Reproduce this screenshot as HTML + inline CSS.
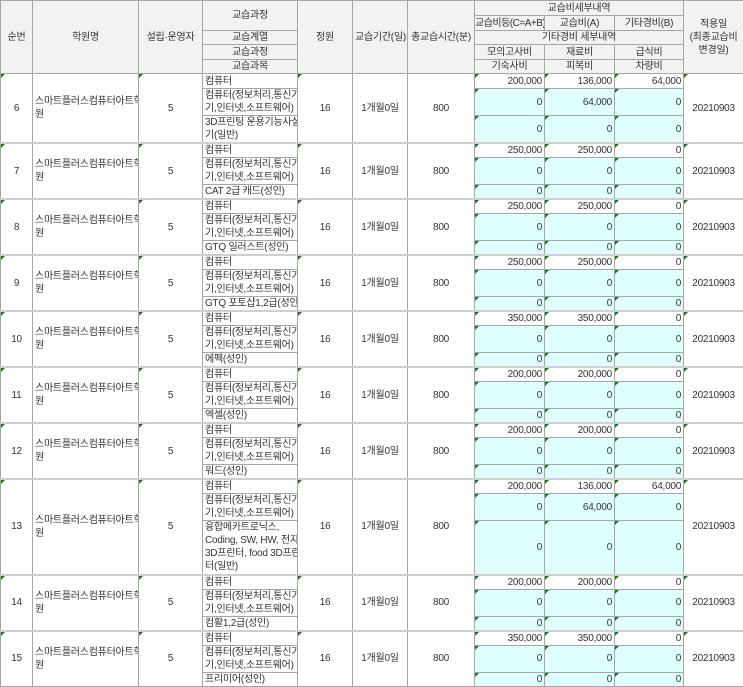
<!DOCTYPE html>
<html><head><meta charset="utf-8"><style>
body{margin:0;background:#fff;}
table{border-collapse:collapse;table-layout:fixed;width:743px;font-family:"Liberation Sans","Noto Sans CJK KR",sans-serif;font-size:10px;color:#333;}
td{border:1px solid #a6a6a6;padding:0 2px;line-height:13px;text-align:center;position:relative;overflow:hidden;white-space:nowrap;letter-spacing:-0.25px;}
.h td{background:#f2f2f2;}
.l{text-align:left;padding-left:2px;padding-right:0;}
.r{text-align:right;}
.c{background:#dfffff;}
.g::before{content:"";position:absolute;left:0;top:0;border-top:4px solid #1a7a1a;border-right:4px solid transparent;}
tr.s td{border-top:2px solid #cfcfcf;}
</style></head><body>
<table>
<colgroup><col style="width:32px"><col style="width:106px"><col style="width:64px"><col style="width:95px"><col style="width:55px"><col style="width:55px"><col style="width:67px"><col style="width:70px"><col style="width:70px"><col style="width:69px"><col style="width:60px"></colgroup>
<tr class="h" style="height:15px"><td rowspan="5">순번</td><td rowspan="5">학원명</td><td rowspan="5">설립·운영자</td><td rowspan="2">교습과정</td><td rowspan="5">정원</td><td rowspan="5">교습기간(일)</td><td rowspan="5">총교습시간(분)</td><td colspan="3">교습비세부내역</td><td rowspan="5">적용일<br>(최종교습비<br>변경일)</td></tr>
<tr class="h" style="height:15px"><td style="letter-spacing:-0.5px;padding:0">교습비등(C=A+B)</td><td>교습비(A)</td><td>기타경비(B)</td></tr>
<tr class="h" style="height:14px"><td>교습계열</td><td colspan="3">기타경비 세부내역</td></tr>
<tr class="h" style="height:15px"><td>교습과정</td><td>모의고사비</td><td>재료비</td><td>급식비</td></tr>
<tr class="h" style="height:14px"><td>교습과목</td><td>기숙사비</td><td>피복비</td><td>차량비</td></tr>

<tr style="height:15px"><td rowspan="3" class="g">6</td><td rowspan="3" class="l">스마트플러스컴퓨터아트학<br>원</td><td rowspan="3" class="g">5</td><td class="l">컴퓨터</td><td rowspan="3" class="g">16</td><td rowspan="3">1개월0일</td><td rowspan="3">800</td><td class="r g">200,000</td><td class="r g">136,000</td><td class="r g">64,000</td><td rowspan="3" class="g">20210903</td></tr>
<tr style="height:27px"><td class="l">컴퓨터(정보처리,통신기<br>기,인터넷,소프트웨어)</td><td class="r c g">0</td><td class="r c g">64,000</td><td class="r c g">0</td></tr>
<tr style="height:26px"><td class="l">3D프린팅 운용기능사실<br>기(일반)</td><td class="r c g">0</td><td class="r c g">0</td><td class="r c g">0</td></tr>

<tr class="s" style="height:14px"><td rowspan="3" class="g">7</td><td rowspan="3" class="l">스마트플러스컴퓨터아트학<br>원</td><td rowspan="3" class="g">5</td><td class="l">컴퓨터</td><td rowspan="3" class="g">16</td><td rowspan="3">1개월0일</td><td rowspan="3">800</td><td class="r g">250,000</td><td class="r g">250,000</td><td class="r g">0</td><td rowspan="3" class="g">20210903</td></tr>
<tr style="height:26px"><td class="l">컴퓨터(정보처리,통신기<br>기,인터넷,소프트웨어)</td><td class="r c g">0</td><td class="r c g">0</td><td class="r c g">0</td></tr>
<tr style="height:14px"><td class="l">CAT 2급 캐드(성인)</td><td class="r c g">0</td><td class="r c g">0</td><td class="r c g">0</td></tr>

<tr class="s" style="height:14px"><td rowspan="3" class="g">8</td><td rowspan="3" class="l">스마트플러스컴퓨터아트학<br>원</td><td rowspan="3" class="g">5</td><td class="l">컴퓨터</td><td rowspan="3" class="g">16</td><td rowspan="3">1개월0일</td><td rowspan="3">800</td><td class="r g">250,000</td><td class="r g">250,000</td><td class="r g">0</td><td rowspan="3" class="g">20210903</td></tr>
<tr style="height:26px"><td class="l">컴퓨터(정보처리,통신기<br>기,인터넷,소프트웨어)</td><td class="r c g">0</td><td class="r c g">0</td><td class="r c g">0</td></tr>
<tr style="height:14px"><td class="l">GTQ 일러스트(성인)</td><td class="r c g">0</td><td class="r c g">0</td><td class="r c g">0</td></tr>

<tr class="s" style="height:14px"><td rowspan="3" class="g">9</td><td rowspan="3" class="l">스마트플러스컴퓨터아트학<br>원</td><td rowspan="3" class="g">5</td><td class="l">컴퓨터</td><td rowspan="3" class="g">16</td><td rowspan="3">1개월0일</td><td rowspan="3">800</td><td class="r g">250,000</td><td class="r g">250,000</td><td class="r g">0</td><td rowspan="3" class="g">20210903</td></tr>
<tr style="height:26px"><td class="l">컴퓨터(정보처리,통신기<br>기,인터넷,소프트웨어)</td><td class="r c g">0</td><td class="r c g">0</td><td class="r c g">0</td></tr>
<tr style="height:14px"><td class="l">GTQ 포토샵1,2급(성인)</td><td class="r c g">0</td><td class="r c g">0</td><td class="r c g">0</td></tr>

<tr class="s" style="height:14px"><td rowspan="3" class="g">10</td><td rowspan="3" class="l">스마트플러스컴퓨터아트학<br>원</td><td rowspan="3" class="g">5</td><td class="l">컴퓨터</td><td rowspan="3" class="g">16</td><td rowspan="3">1개월0일</td><td rowspan="3">800</td><td class="r g">350,000</td><td class="r g">350,000</td><td class="r g">0</td><td rowspan="3" class="g">20210903</td></tr>
<tr style="height:27px"><td class="l">컴퓨터(정보처리,통신기<br>기,인터넷,소프트웨어)</td><td class="r c g">0</td><td class="r c g">0</td><td class="r c g">0</td></tr>
<tr style="height:14px"><td class="l">에펙(성인)</td><td class="r c g">0</td><td class="r c g">0</td><td class="r c g">0</td></tr>

<tr class="s" style="height:14px"><td rowspan="3" class="g">11</td><td rowspan="3" class="l">스마트플러스컴퓨터아트학<br>원</td><td rowspan="3" class="g">5</td><td class="l">컴퓨터</td><td rowspan="3" class="g">16</td><td rowspan="3">1개월0일</td><td rowspan="3">800</td><td class="r g">200,000</td><td class="r g">200,000</td><td class="r g">0</td><td rowspan="3" class="g">20210903</td></tr>
<tr style="height:26px"><td class="l">컴퓨터(정보처리,통신기<br>기,인터넷,소프트웨어)</td><td class="r c g">0</td><td class="r c g">0</td><td class="r c g">0</td></tr>
<tr style="height:14px"><td class="l">엑셀(성인)</td><td class="r c g">0</td><td class="r c g">0</td><td class="r c g">0</td></tr>

<tr class="s" style="height:14px"><td rowspan="3" class="g">12</td><td rowspan="3" class="l">스마트플러스컴퓨터아트학<br>원</td><td rowspan="3" class="g">5</td><td class="l">컴퓨터</td><td rowspan="3" class="g">16</td><td rowspan="3">1개월0일</td><td rowspan="3">800</td><td class="r g">200,000</td><td class="r g">200,000</td><td class="r g">0</td><td rowspan="3" class="g">20210903</td></tr>
<tr style="height:26px"><td class="l">컴퓨터(정보처리,통신기<br>기,인터넷,소프트웨어)</td><td class="r c g">0</td><td class="r c g">0</td><td class="r c g">0</td></tr>
<tr style="height:14px"><td class="l">워드(성인)</td><td class="r c g">0</td><td class="r c g">0</td><td class="r c g">0</td></tr>

<tr class="s" style="height:14px"><td rowspan="3" class="g">13</td><td rowspan="3" class="l">스마트플러스컴퓨터아트학<br>원</td><td rowspan="3" class="g">5</td><td class="l">컴퓨터</td><td rowspan="3" class="g">16</td><td rowspan="3">1개월0일</td><td rowspan="3">800</td><td class="r g">200,000</td><td class="r g">136,000</td><td class="r g">64,000</td><td rowspan="3" class="g">20210903</td></tr>
<tr style="height:26px"><td class="l">컴퓨터(정보처리,통신기<br>기,인터넷,소프트웨어)</td><td class="r c g">0</td><td class="r c g">64,000</td><td class="r c g">0</td></tr>
<tr style="height:54px"><td class="l">융합메카트로닉스,<br>Coding, SW, HW, 전자,<br>3D프린터, food 3D프린<br>터(일반)</td><td class="r c g">0</td><td class="r c g">0</td><td class="r c g">0</td></tr>

<tr class="s" style="height:14px"><td rowspan="3" class="g">14</td><td rowspan="3" class="l">스마트플러스컴퓨터아트학<br>원</td><td rowspan="3" class="g">5</td><td class="l">컴퓨터</td><td rowspan="3" class="g">16</td><td rowspan="3">1개월0일</td><td rowspan="3">800</td><td class="r g">200,000</td><td class="r g">200,000</td><td class="r g">0</td><td rowspan="3" class="g">20210903</td></tr>
<tr style="height:26px"><td class="l">컴퓨터(정보처리,통신기<br>기,인터넷,소프트웨어)</td><td class="r c g">0</td><td class="r c g">0</td><td class="r c g">0</td></tr>
<tr style="height:14px"><td class="l">컴활1,2급(성인)</td><td class="r c g">0</td><td class="r c g">0</td><td class="r c g">0</td></tr>

<tr class="s" style="height:14px"><td rowspan="3" class="g">15</td><td rowspan="3" class="l">스마트플러스컴퓨터아트학<br>원</td><td rowspan="3" class="g">5</td><td class="l">컴퓨터</td><td rowspan="3" class="g">16</td><td rowspan="3">1개월0일</td><td rowspan="3">800</td><td class="r g">350,000</td><td class="r g">350,000</td><td class="r g">0</td><td rowspan="3" class="g">20210903</td></tr>
<tr style="height:26px"><td class="l">컴퓨터(정보처리,통신기<br>기,인터넷,소프트웨어)</td><td class="r c g">0</td><td class="r c g">0</td><td class="r c g">0</td></tr>
<tr style="height:14px"><td class="l">프리미어(성인)</td><td class="r c g">0</td><td class="r c g">0</td><td class="r c g">0</td></tr>
</table>
</body></html>
